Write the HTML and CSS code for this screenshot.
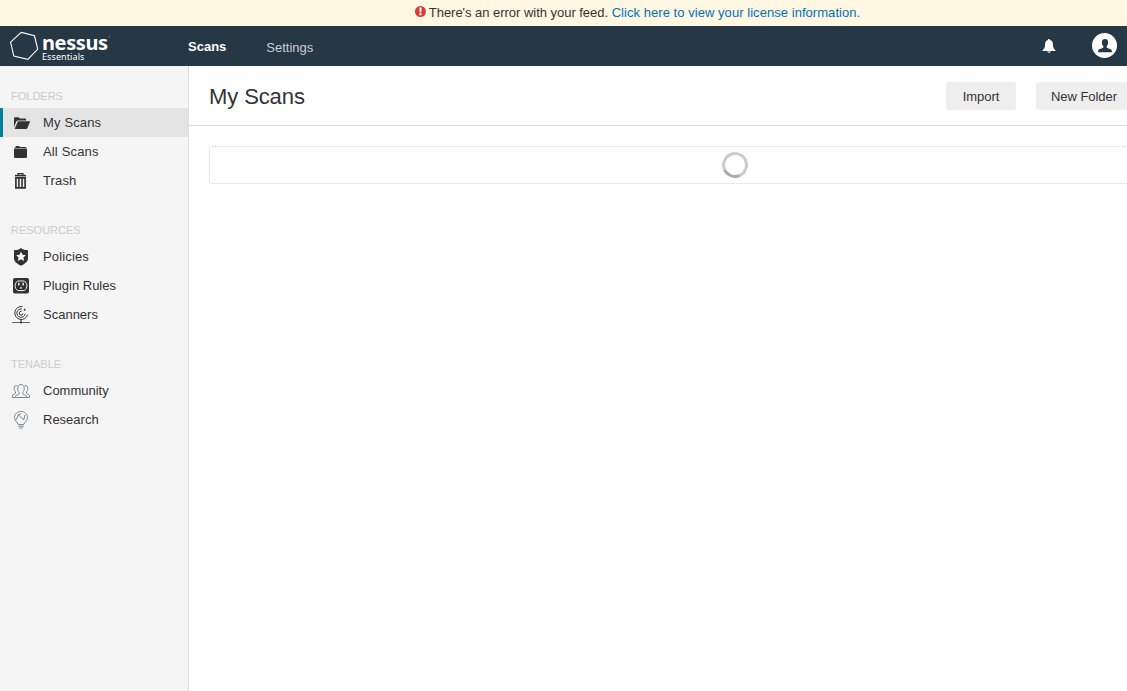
FILE: index.html
```html
<!DOCTYPE html>
<html lang="en">
<head>
  <meta charset="UTF-8" />
  <title>Nessus Essentials / Folders / My Scans</title>
  <link rel="stylesheet" href="styles.css">
</head>
<body>
  <div class="page">
    <div class="banner">
      <svg class="alert-icon" viewBox="0 0 11 11"><circle cx="5.5" cy="5.5" r="5.5" fill="#d43f3a"/><path d="M4.4 1.4h2.2L6.3 6.4H4.7zM4.5 7.2h2v2H4.5z" fill="#fff"/></svg>
      <span>There's an error with your feed. <a href="#">Click here to view your license information.</a></span>
    </div>

    <header class="topbar">
      <div class="logo">
        <svg class="logo-mark" viewBox="0 0 30 30"><path d="M12.2 1.4L25.5 4.8L28.7 18.2L18.9 28.4L4.8 25L1.6 11.1Z" fill="none" stroke="#fff" stroke-width="1.1"/></svg>
        <div class="logo-text">
          <span class="logo-name">nessus</span>
          <span class="logo-edition">Essentials</span>
        </div>
        <span class="logo-dot"></span>
      </div>
      <nav class="tabs">
        <a class="tab active" href="#">Scans</a>
        <a class="tab" href="#">Settings</a>
      </nav>
      <div class="tools">
        <svg class="bell" viewBox="0 0 14 14"><path d="M7 0C6.3 0 6 .5 6 1C4 1.5 3.1 3 3.1 5C3.1 8.4 2.2 9.9.5 11.2V12h13v-.8C11.8 9.9 10.9 8.4 10.9 5C10.9 3 10 1.5 8 1C8 .5 7.7 0 7 0ZM5.2 12.4C5.6 14.2 8.4 14.2 8.8 12.4Z" fill="#fff"/></svg>
        <svg class="avatar" viewBox="0 0 25 25"><circle cx="12.5" cy="12.5" r="12.5" fill="#fff"/><path d="M13 6C10.7 6 9.7 7.6 9.9 9.7C10 11.6 10.7 12.6 11.4 13.3V14.6C10.7 15.6 6.6 15.6 6.1 18V19.3H19.9V18C19.4 15.6 15.3 15.6 14.6 14.6V13.3C15.3 12.6 16 11.6 16.1 9.7C16.3 7.6 15.3 6 13 6Z" fill="#263746"/></svg>
      </div>
    </header>

    <div class="body">
      <aside class="sidebar">
        <h5>Folders</h5>
        <ul>
          <li class="active">
            <svg viewBox="0 0 20 20"><path d="M3 14V5.2Q3 4.2 4 4.2H7.5L9 5.6H14Q15.2 5.6 15.2 6.8V7.4H7.2Q6 7.4 5.3 8.5ZM7 8.2H19.2L16.4 15.2Q16.1 16 15.2 16H3.6Z" fill="#333"/></svg>
            <a class="wide" href="#">My Scans</a>
          </li>
          <li>
            <svg viewBox="0 0 20 20"><path d="M4.2 5.5L5 4H8L9 5.1H14.8L15.5 6.1H3.6ZM3 6.6H16V14.8Q16 16 14.8 16H4.2Q3 16 3 14.8Z" fill="#333"/></svg>
            <a class="wide" href="#">All Scans</a>
          </li>
          <li>
            <svg viewBox="0 0 20 20"><g fill="none" stroke="#333"><path d="M7 4V2.6H12V4" stroke-width="1.2"/><path d="M4 4.6H15" stroke-width="1.6"/><path d="M4.9 6.8H14.1V16.9H4.9Z" stroke-width="1.7"/><path d="M7.9 6.5V17M11.1 6.5V17" stroke-width="1.6"/></g></svg>
            <a class="wide" href="#">Trash</a>
          </li>
        </ul>
        <h5>Resources</h5>
        <ul>
          <li>
            <svg viewBox="0 0 20 20"><path d="M10 1C8.3 2.5 5.8 3.2 3 3.3V12C3.3 15 7.5 17.7 10 18.7C12.5 17.7 16.7 15 17 12V3.3C14.2 3.2 11.7 2.5 10 1Z" fill="#333"/><path d="M10 4.8L11.5 7.8L14.8 8.3L12.4 10.6L13 13.9L10 12.3L7 13.9L7.6 10.6L5.2 8.3L8.5 7.8Z" fill="#fff"/></svg>
            <a class="wide" href="#">Policies</a>
          </li>
          <li>
            <svg viewBox="0 0 20 20"><rect x="2" y="2" width="16" height="15.5" rx="2" fill="#333"/><path d="M6.6 5H13.4Q16 7 16 9.8Q16 12.6 13.4 14.6H6.6Q4 12.6 4 9.8Q4 7 6.6 5Z" fill="none" stroke="#eee"/><path d="M7.8 6.8V9.6M12.2 6.8V9.6M10 11V12.8" stroke="#eee" stroke-width="1.5"/></svg>
            <a href="#">Plugin Rules</a>
          </li>
          <li>
            <svg viewBox="0 0 20 20"><g fill="none" stroke="#333"><path d="M11.5 1.6A6.5 6.5 0 1 0 16.6 9.6"/><path d="M11 4A4.2 4.2 0 1 0 14.2 8.8"/><path d="M10.5 6.3A1.9 1.9 0 1 0 12 8.4"/><path d="M1 17.5H19" stroke="#666"/><path d="M10 14.5V18"/></g><circle cx="13.6" cy="4.8" r="1" fill="#333"/><circle cx="10" cy="17.5" r="1.1" fill="#333"/></svg>
            <a href="#">Scanners</a>
          </li>
        </ul>
        <h5>Tenable</h5>
        <ul>
          <li>
            <svg viewBox="0 0 20 20"><g fill="none" stroke="#6d7a85" stroke-width=".9"><path d="M4.5 16.5V15.2C5 13.9 7.5 13.9 8.2 12.8V11.4C7 10.3 6.7 8.8 6.8 7.2C6.8 4.8 8 3.5 10 3.5C12 3.5 13.2 4.8 13.2 7.2C13.3 8.8 13 10.3 11.8 11.4V12.8C12.5 13.9 15 13.9 15.5 15.2V16.5Z"/><path d="M6.5 4.7C4.7 4.1 3.2 5.1 3.2 7.3C3.2 9 3.8 10.2 4.5 10.8V12.3C3.8 13.3 1.5 13.2 1.4 15V16.5H4.5M13.5 4.7C15.3 4.1 16.8 5.1 16.8 7.3C16.8 9 16.2 10.2 15.5 10.8V12.3C16.2 13.3 18.5 13.2 18.6 15V16.5H15.5"/></g></svg>
            <a href="#">Community</a>
          </li>
          <li>
            <svg viewBox="0 0 20 20"><g fill="none" stroke="#6d7a85" stroke-width=".9"><path d="M7.3 14.5C7 12.3 3.5 11 3.5 7.6C3.5 4 6.4 1.5 10 1.5C13.6 1.5 16.5 4 16.5 7.6C16.5 11 13 12.3 12.7 14.5Z"/><path d="M7.2 16.2H12.8M8.2 18H11.8M5.4 9.6L7.2 4.8L12.8 9.8L13.8 5M7.2 4.8L10.2 3.6"/></g></svg>
            <a href="#">Research</a>
          </li>
        </ul>
      </aside>

      <main class="content">
        <div class="titlebar">
          <h1>My Scans</h1>
          <button class="import">Import</button>
          <button>New Folder</button>
        </div>
        <div class="loading">
          <div class="spinner"></div>
        </div>
      </main>
    </div>
  </div>
</body>
</html>
```

FILE: styles.css
```css
* {
  box-sizing: border-box;
}
html {
  overflow: hidden;
}
body {
  margin: 0;
  height: 100vh;
  overflow: hidden;
  font-family: "Liberation Sans", Arial, sans-serif;
  font-size: 13px;
  color: #333;
  background: #fff;
}
a {
  color: inherit;
  text-decoration: none;
}
.page {
  display: flex;
  flex-direction: column;
  width: 1275px;
  height: 100vh;
}
.banner {
  display: flex;
  flex: none;
  justify-content: center;
  gap: 3px;
  height: 26px;
  line-height: 26px;
  background: #fff7e2;
}
.banner span {
  letter-spacing: -0.03px;
}
.banner a {
  letter-spacing: 0.05px;
  color: #0071b9;
}
.alert-icon {
  width: 11px;
  height: 11px;
  margin-top: 6px;
}

.topbar {
  display: flex;
  flex: none;
  height: 40px;
  background: #263746;
  color: #fff;
}
.logo {
  display: flex;
  width: 188px;
  padding: 5px 0 0 9px;
}
.logo-mark {
  width: 30px;
  height: 30px;
}
.logo-text {
  display: flex;
  flex-direction: column;
  width: 67px;
  margin-left: 3px;
  font-family: "Noto Sans", sans-serif;
}
.logo-name {
  padding-top: 1px;
  font-size: 20px;
  font-weight: 700;
  line-height: 22px;
  letter-spacing: -0.4px;
}
.logo-edition {
  margin-top: -2px;
  font-size: 9px;
  line-height: 10px;
  letter-spacing: 0.1px;
}
.logo-dot {
  width: 1px;
  height: 1px;
  margin-top: 5px;
  background: #8a949d;
}
.tabs {
  display: flex;
  flex: 1;
  gap: 40px;
}
.tab {
  line-height: 43px;
  color: #c9cfd4;
}
.tab.active {
  line-height: 41px;
  font-weight: bold;
  color: #fff;
}
.tools {
  display: flex;
  align-items: flex-start;
  width: 233px;
}
.bell {
  width: 14px;
  height: 14px;
  margin-top: 13px;
}
.avatar {
  width: 25px;
  height: 25px;
  margin: 7px 0 0 36px;
}

.body {
  display: flex;
  flex: 1;
}
.sidebar {
  width: 189px;
  padding-top: 19px;
  background: #f5f5f5;
  border-right: 1px solid #ddd;
}
.sidebar h5 {
  margin: 0;
  padding-left: 11px;
  font-size: 11px;
  font-weight: normal;
  line-height: 23px;
  text-transform: uppercase;
  color: #ccc;
}
.sidebar ul {
  margin: 0 0 24px;
  padding: 0;
  list-style: none;
}
.sidebar li {
  display: flex;
  align-items: center;
  gap: 12px;
  height: 29px;
  padding-left: 11px;
}
.sidebar li.active {
  padding-left: 8px;
  background: #e4e4e4;
  border-left: 3px solid #00839b;
}
.sidebar .wide {
  letter-spacing: 0.15px;
}
.sidebar svg {
  width: 20px;
  height: 20px;
}

.content {
  flex: 1;
}
.titlebar {
  display: flex;
  gap: 20px;
  height: 60px;
  padding: 16px 0 0 20px;
  border-bottom: 1px solid #ddd;
}
.titlebar h1 {
  flex: none;
  width: 717px;
  margin: 0;
  font-size: 22px;
  font-weight: normal;
  line-height: 29px;
  letter-spacing: -0.1px;
}
button {
  flex: none;
  width: 96px;
  height: 28px;
  padding: 0;
  border: 0;
  border-radius: 3px;
  background: #eee;
  font: inherit;
  line-height: 29px;
  letter-spacing: -0.05px;
  color: #333;
}
button.import {
  width: 70px;
}
.loading {
  display: flex;
  align-items: center;
  justify-content: center;
  width: 1052px;
  height: 38px;
  margin: 20px 0 0 20px;
  border: 1px dotted #d4d4d4;
  border-radius: 4px;
}
.spinner {
  width: 26px;
  height: 26px;
  border: 3px solid #ccc;
  border-bottom-color: #aaa;
  border-radius: 50%;
  transform: rotate(20deg);
}
```
